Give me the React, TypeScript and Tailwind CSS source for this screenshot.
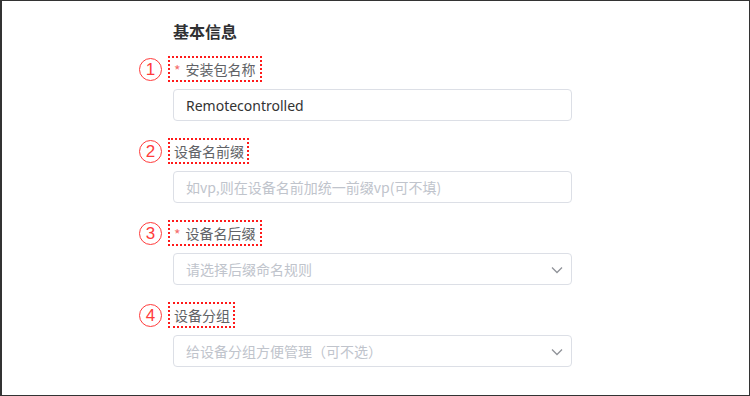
import { ReactNode } from "react";

const cjk = "font-['Microsoft_YaHei','Noto_Sans_CJK_SC',sans-serif]";

type FieldProps = {
  num: number;
  label: string;
  required?: boolean;
  children: ReactNode;
};

const Field = ({ num, label, required, children }: FieldProps) => (
  <div className="flex flex-col">
    <div className="flex items-center h-[26px]">
      <span className="w-[23px] h-[23px] ml-[-34px] mr-[12px] rounded-full border border-[#ff3b3b] text-[#ff3b3b] flex items-center justify-center text-[17px] leading-none font-['Liberation_Sans',sans-serif]">
        {num}
      </span>
      <div
        className={`ml-[-6px] h-[26px] flex items-center border-2 border-dotted border-[#ff1a1a] pl-[4px] ${
          required ? "pr-[4px]" : "pr-[3px]"
        }`}
      >
        {required && <span className="text-[#f56c6c] text-[14px] mr-[5px] mt-[3px]">*</span>}
        <span className="text-[14px] text-[#606266]">{label}</span>
      </div>
    </div>
    <div className="mt-[7px]">{children}</div>
  </div>
);

const Chevron = () => (
  <svg width="12" height="8" viewBox="0 0 12 8" className="absolute right-[8px] top-[12px]">
    <path d="M1 1.5 L6 6.5 L11 1.5" fill="none" stroke="#909399" strokeWidth="1.3" />
  </svg>
);

const Input = ({ value, placeholder, select }: { value?: string; placeholder?: string; select?: boolean }) => (
  <div className="relative w-[399px] h-[32px] border border-[#dcdfe6] rounded-[4px] flex items-center px-[12px] bg-white">
    {value ? (
      <span className="text-[14px] text-[#333] font-['Noto_Sans',sans-serif]">{value}</span>
    ) : (
      <span className="text-[14px] text-[#c0c4cc]">{placeholder}</span>
    )}
    {select && <Chevron />}
  </div>
);

export default function App() {
  return (
    <div className={`w-[750px] h-[396px] border border-[#333] border-l-2 bg-white ${cjk}`}>
      <div className="pl-[171px] pt-[18px] flex flex-col">
        <h3 className="text-[16px] font-bold text-[#303133] leading-[24px]">基本信息</h3>
        <div className="mt-[13px] flex flex-col gap-[17px]">
          <Field num={1} label="安装包名称" required>
            <Input value="Remotecontrolled" />
          </Field>
          <Field num={2} label="设备名前缀">
            <Input placeholder="如vp,则在设备名前加统一前缀vp(可不填)" />
          </Field>
          <Field num={3} label="设备名后缀" required>
            <Input placeholder="请选择后缀命名规则" select />
          </Field>
          <Field num={4} label="设备分组">
            <Input placeholder="给设备分组方便管理（可不选）" select />
          </Field>
        </div>
      </div>
    </div>
  );
}
